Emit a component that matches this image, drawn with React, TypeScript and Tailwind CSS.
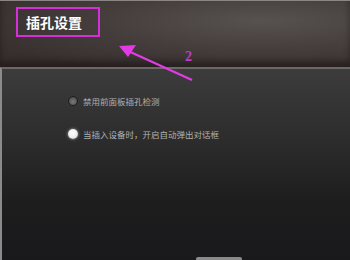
import React from 'react';

const Radio = ({ on }: { on?: boolean }) =>
  on ? (
    <span className="block w-[10px] h-[10px] rounded-full bg-[radial-gradient(circle_at_45%_40%,#ffffff,#ececec_55%,#a0a0a0)] shadow-[0_0_3px_rgba(255,255,255,0.6)]" />
  ) : (
    <span className="block w-[10px] h-[10px] rounded-full border border-[#1e1e1e] bg-[radial-gradient(circle_at_50%_60%,#7a7a7a,#5a5a5a_55%,#3a3a3a)]" />
  );

const App = () => {
  const options = [
    { label: '禁用前面板插孔检测', on: false },
    { label: '当插入设备时，开启自动弹出对话框', on: true },
  ];

  return (
    <div
      className="relative w-[350px] h-[260px] overflow-hidden flex flex-col bg-[#1b1a1b]"
      style={{ fontFamily: '"Noto Sans CJK SC", "Noto Sans", sans-serif' }}
    >
      {/* header */}
      <div className="h-[67px] border-t border-[#8a8685] bg-[radial-gradient(ellipse_at_75%_30%,#57514f,#443d3b_45%,#372f2e_85%)] shadow-[inset_0_-6px_6px_rgba(0,0,0,0.35)] pt-[6px] pl-[16px]">
        <div className="w-[84px] h-[30px] border-2 border-[#d42fd9] flex items-center pl-[8px]">
          <span className="text-[14px] leading-none font-bold text-white">插孔设置</span>
        </div>
      </div>

      {/* body */}
      <div className="flex-1 flex flex-col border-t-2 border-[#6b6867] border-l-2 border-l-[#8c8b8b] bg-[linear-gradient(to_bottom,#3d3c3c,#2c2b2b_40%,#1e1d1e_70%,#19181a)]">
        <div className="flex flex-col gap-[21px] pt-[26px] pl-[66px]">
          {options.map((o) => (
            <div key={o.label} className="flex items-center gap-[5px] h-[12px]">
              <Radio on={o.on} />
              <span className="text-[8.5px] leading-none text-[#b0b0b0]">{o.label}</span>
            </div>
          ))}
        </div>
        <div className="mt-auto ml-[194px] w-[46px] h-[3px] rounded-t-[2px] bg-[#8a8a8a]" />
      </div>

      {/* annotation overlay */}
      <svg className="absolute left-0 top-0 pointer-events-none" width="350" height="260">
        <line x1="192" y1="80" x2="126" y2="50" stroke="#e23be6" strokeWidth="2.2" />
        <polygon points="119,46 136,45 128,57" fill="#e23be6" />
      </svg>
      <span className="absolute left-[185px] top-[50px] text-[14px] leading-none font-bold text-[#c23bc6]" style={{ fontFamily: '"Liberation Serif", serif' }}>
        2
      </span>
    </div>
  );
};

export default App;
